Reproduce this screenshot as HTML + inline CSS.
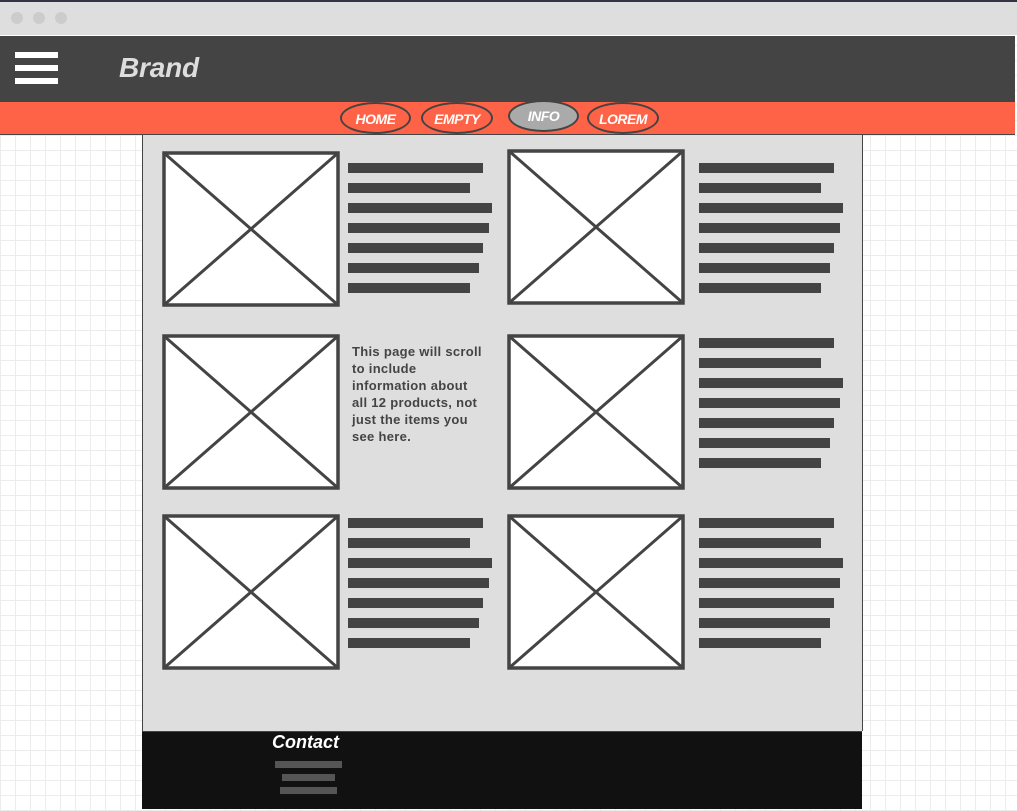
<!DOCTYPE html><html><head><style>
body{margin:0;width:1017px;height:811px;position:relative;overflow:hidden;font-family:"Liberation Sans",sans-serif;
background-color:#fff;background-image:linear-gradient(#ececec 1px,transparent 1px),linear-gradient(90deg,#ececec 1px,transparent 1px);background-size:15px 15px;}
.a{position:absolute}
.bar{position:absolute;height:10px;background:#444}
.nav{position:absolute;height:28px;border:2px solid #444;border-radius:50%;background:#ff6347;color:#fff;font-weight:bold;font-style:italic;font-size:14px;text-align:center;line-height:30px;letter-spacing:-0.5px}
</style></head><body>
<div class="a" style="left:0;top:0;width:1017px;height:2px;background:#334"></div>
<div class="a" style="left:0;top:2px;width:1017px;height:33px;background:#dedede;border-bottom:1px solid #fff"></div>
<div class="a" style="left:11px;top:12px;width:12px;height:12px;border-radius:50%;background:#ccc"></div>
<div class="a" style="left:33px;top:12px;width:12px;height:12px;border-radius:50%;background:#ccc"></div>
<div class="a" style="left:55px;top:12px;width:12px;height:12px;border-radius:50%;background:#ccc"></div>
<div class="a" style="left:0;top:36px;width:1015px;height:66px;background:#444"></div>
<div class="a" style="left:15px;top:52px;width:43px;height:6px;background:#fff"></div>
<div class="a" style="left:15px;top:65px;width:43px;height:6px;background:#fff"></div>
<div class="a" style="left:15px;top:78px;width:43px;height:6px;background:#fff"></div>
<div class="a" style="left:119px;top:52px;color:#ddd;font-size:28px;font-weight:bold;font-style:italic;letter-spacing:-0.2px">Brand</div>
<div class="a" style="left:0;top:102px;width:1015px;height:32px;background:#ff6347;border-bottom:1px solid #444"></div>
<div class="nav" style="left:340px;top:102px;width:67px">HOME</div>
<div class="nav" style="left:421px;top:102px;width:68px">EMPTY</div>
<div class="nav" style="left:508px;top:100px;width:67px;background:#aaa;line-height:29px">INFO</div>
<div class="nav" style="left:587px;top:102px;width:68px">LOREM</div>
<div class="a" style="left:142px;top:135px;width:719px;height:596px;background:#dedede;border-left:1px solid #444;border-right:1px solid #444"></div>
<div class="a" style="left:142px;top:731px;width:720px;height:77px;background:#111;border-top:1px solid #444"></div>
<div class="a" style="left:272px;top:732px;color:#fff;font-size:18px;font-weight:bold;font-style:italic">Contact</div>
<div class="a" style="left:275px;top:761px;width:67px;height:7px;background:#555"></div>
<div class="a" style="left:282px;top:774px;width:53px;height:7px;background:#555"></div>
<div class="a" style="left:280px;top:787px;width:57px;height:7px;background:#555"></div>
<svg class="a" style="left:0;top:0" width="1017" height="811">
<g fill="#fff" stroke="#444" stroke-width="3.5">
<rect x="164" y="153" width="174" height="152"/><rect x="509" y="151" width="174" height="152"/>
<rect x="164" y="336" width="174" height="152"/><rect x="509" y="336" width="174" height="152"/>
<rect x="164" y="516" width="174" height="152"/><rect x="509" y="516" width="174" height="152"/>
</g>
<g stroke="#444" stroke-width="3">
<path d="M164 153L338 305M338 153L164 305M509 151L683 303M683 151L509 303M164 336L338 488M338 336L164 488M509 336L683 488M683 336L509 488M164 516L338 668M338 516L164 668M509 516L683 668M683 516L509 668"/>
</g></svg>
<div class="a" style="left:352px;top:343px;white-space:nowrap;font-size:13px;font-weight:bold;color:#444;line-height:17px;letter-spacing:0.3px">This page will scroll<br>to include<br>information about<br>all 12 products, not<br>just the items you<br>see here.</div>
<div class="bar" style="left:348px;top:163px;width:135px"></div><div class="bar" style="left:348px;top:183px;width:122px"></div><div class="bar" style="left:348px;top:203px;width:144px"></div><div class="bar" style="left:348px;top:223px;width:141px"></div><div class="bar" style="left:348px;top:243px;width:135px"></div><div class="bar" style="left:348px;top:263px;width:131px"></div><div class="bar" style="left:348px;top:283px;width:122px"></div>
<div class="bar" style="left:699px;top:163px;width:135px"></div><div class="bar" style="left:699px;top:183px;width:122px"></div><div class="bar" style="left:699px;top:203px;width:144px"></div><div class="bar" style="left:699px;top:223px;width:141px"></div><div class="bar" style="left:699px;top:243px;width:135px"></div><div class="bar" style="left:699px;top:263px;width:131px"></div><div class="bar" style="left:699px;top:283px;width:122px"></div>
<div class="bar" style="left:699px;top:338px;width:135px"></div><div class="bar" style="left:699px;top:358px;width:122px"></div><div class="bar" style="left:699px;top:378px;width:144px"></div><div class="bar" style="left:699px;top:398px;width:141px"></div><div class="bar" style="left:699px;top:418px;width:135px"></div><div class="bar" style="left:699px;top:438px;width:131px"></div><div class="bar" style="left:699px;top:458px;width:122px"></div>
<div class="bar" style="left:348px;top:518px;width:135px"></div><div class="bar" style="left:348px;top:538px;width:122px"></div><div class="bar" style="left:348px;top:558px;width:144px"></div><div class="bar" style="left:348px;top:578px;width:141px"></div><div class="bar" style="left:348px;top:598px;width:135px"></div><div class="bar" style="left:348px;top:618px;width:131px"></div><div class="bar" style="left:348px;top:638px;width:122px"></div>
<div class="bar" style="left:699px;top:518px;width:135px"></div><div class="bar" style="left:699px;top:538px;width:122px"></div><div class="bar" style="left:699px;top:558px;width:144px"></div><div class="bar" style="left:699px;top:578px;width:141px"></div><div class="bar" style="left:699px;top:598px;width:135px"></div><div class="bar" style="left:699px;top:618px;width:131px"></div><div class="bar" style="left:699px;top:638px;width:122px"></div>
</body></html>
